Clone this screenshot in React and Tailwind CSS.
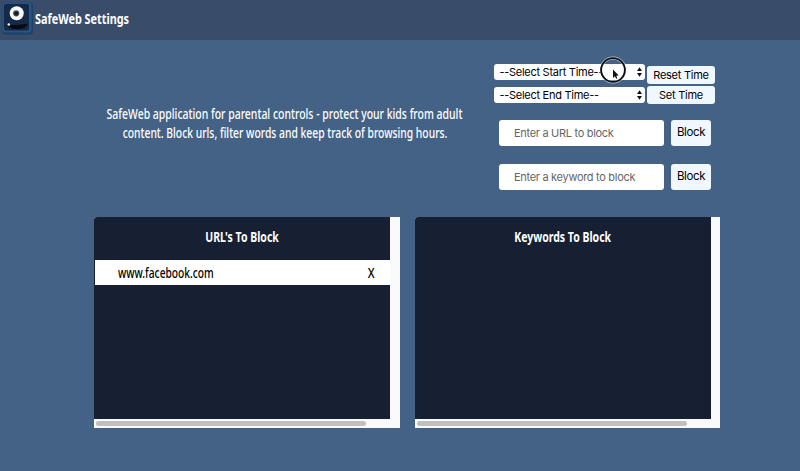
import React from "react";

const condensed = "font-['Noto_Sans',sans-serif] whitespace-nowrap";

function Logo() {
  return (
    <svg width="34" height="35" viewBox="0 0 34 35" className="shrink-0">
      <rect x="2" y="2.5" width="31" height="32" rx="3" fill="#1d4069" />
      <rect x="2.5" y="2.5" width="29" height="30" rx="2.5" fill="#285486" />
      <rect x="4" y="4" width="25" height="26.5" rx="2" fill="#142a48" />
      <circle cx="16.7" cy="13.2" r="7" fill="#f8fbfc" />
      <circle cx="16.2" cy="13.3" r="3.1" fill="#4b4e59" />
      <circle cx="16.2" cy="13.4" r="2" fill="#151d2c" />
      <path d="M6.5 24.2 Q17 26 28 23.5 Q26 29.5 17 29.2 Q9 29 6.5 24.2Z" fill="#080b14" />
      <circle cx="8.8" cy="24.5" r="1.3" fill="#e9f2f7" />
    </svg>
  );
}

function TimeSelect({ label }) {
  return (
    <div className="flex h-[16px] w-[151px] items-center justify-between rounded-[3px] bg-white pl-[5.5px] pr-[3px] text-[11px] leading-none text-black">
      <span className="whitespace-nowrap tracking-[-0.28px]">{label}</span>
      <svg width="5" height="10" viewBox="0 0 5 10">
        <path d="M2.5 0.3 5 4H0ZM2.5 9.7 5 6H0Z" fill="#111" />
      </svg>
    </div>
  );
}

function BlockForm({ placeholder }) {
  return (
    <div className="flex gap-[7px]">
      <div className="flex h-[26px] w-[165px] items-center rounded-[3px] bg-white pl-[15px] pt-px text-[11px] text-[#666]">
        <span className="whitespace-nowrap tracking-[-0.3px]">{placeholder}</span>
      </div>
      <button className="h-[26px] w-[40px] rounded-[3px] bg-[#f0f7ff] text-[11.5px] leading-none tracking-[-0.4px] text-black">Block</button>
    </div>
  );
}

function Panel({ title, children }) {
  return (
    <section className="flex h-[211px] w-[305.5px] flex-col rounded-tl-[3px] bg-[#fafafa]">
      <div className="h-[202px] w-[296px] rounded-tl-[3px] bg-[#172032]">
        <div className="flex h-[43px] items-center justify-center pb-[4px]">
          <h2 className={`${condensed} scale-x-[0.75] text-[14px] font-bold leading-[19px] text-white`}>{title}</h2>
        </div>
        {children}
      </div>
      <div className="flex h-[9px] items-center pl-[2px]">
        <div className="h-[5px] w-[270px] rounded-full bg-[#c1bfc1]" />
      </div>
    </section>
  );
}

export default function App() {
  return (
    <div className="relative h-[471px] w-[800px] overflow-hidden bg-[#446286] font-['Inter','Liberation_Sans',sans-serif]">
      <header className="flex h-[40px] items-start bg-[#394d6b]">
        <Logo />
        <h1 className={`${condensed} ml-px mt-[8px] origin-left scale-x-[0.775] text-[14px] font-bold leading-[21px] text-white`}>SafeWeb Settings</h1>
      </header>
      <div className="flex h-[177px]">
        <div className="ml-[93px] mt-[64px] flex w-[383px] flex-col items-center text-[14px] font-medium leading-[19px] text-white">
          <p className={`${condensed} scale-x-[0.746]`}>SafeWeb application for parental controls - protect your kids from adult</p>
          <p className={`${condensed} scale-x-[0.738]`}>content. Block urls, filter words and keep track of browsing hours.</p>
        </div>
        <div className="ml-[18px] pt-[24px]">
          <div className="flex gap-[2px]">
            <div className="flex flex-col gap-[7px]">
              <TimeSelect label="--Select Start Time--" />
              <TimeSelect label="--Select End Time--" />
            </div>
            <div className="flex flex-col gap-[2px] pt-[2px]">
              <button className="h-[18px] w-[68px] whitespace-nowrap rounded-[3px] bg-[#f0f7ff] text-[11px] leading-none tracking-[-0.25px] text-black">Reset Time</button>
              <button className="h-[18px] w-[68px] whitespace-nowrap rounded-[3px] bg-[#f0f7ff] text-[11px] leading-none tracking-[-0.25px] text-black">Set Time</button>
            </div>
          </div>
          <div className="ml-[5px] mt-[15.5px] flex flex-col gap-[18px]">
            <BlockForm placeholder="Enter a URL to block" />
            <BlockForm placeholder="Enter a keyword to block" />
          </div>
        </div>
      </div>
      <main className="ml-[94px] flex gap-[15px]">
        <Panel title="URL's To Block">
          <div className="ml-px flex h-[25px] items-center justify-between bg-white pb-px pl-[23px] pr-[15px] text-[14px] font-medium text-black">
            <span className={`${condensed} origin-left scale-x-[0.73]`}>www.facebook.com</span>
            <span className={`${condensed} origin-right scale-x-[0.8]`}>X</span>
          </div>
        </Panel>
        <Panel title="Keywords To Block" />
      </main>
      <svg className="absolute left-[599px] top-[56px]" width="28" height="28" viewBox="0 0 28 28">
        <rect x="3" y="12" width="7" height="8" fill="#fff" />
        <circle cx="14" cy="14" r="12" fill="none" stroke="#fff" strokeOpacity=".65" strokeWidth="3" />
        <circle cx="14" cy="14" r="11.9" fill="none" stroke="#0b1018" strokeWidth="1.9" />
        <path d="M14 13.5V22l1.9-1.7 1.3 2.5 1.2-.6-1.2-2.5 2.5-.2Z" fill="#111" />
      </svg>
    </div>
  );
}
